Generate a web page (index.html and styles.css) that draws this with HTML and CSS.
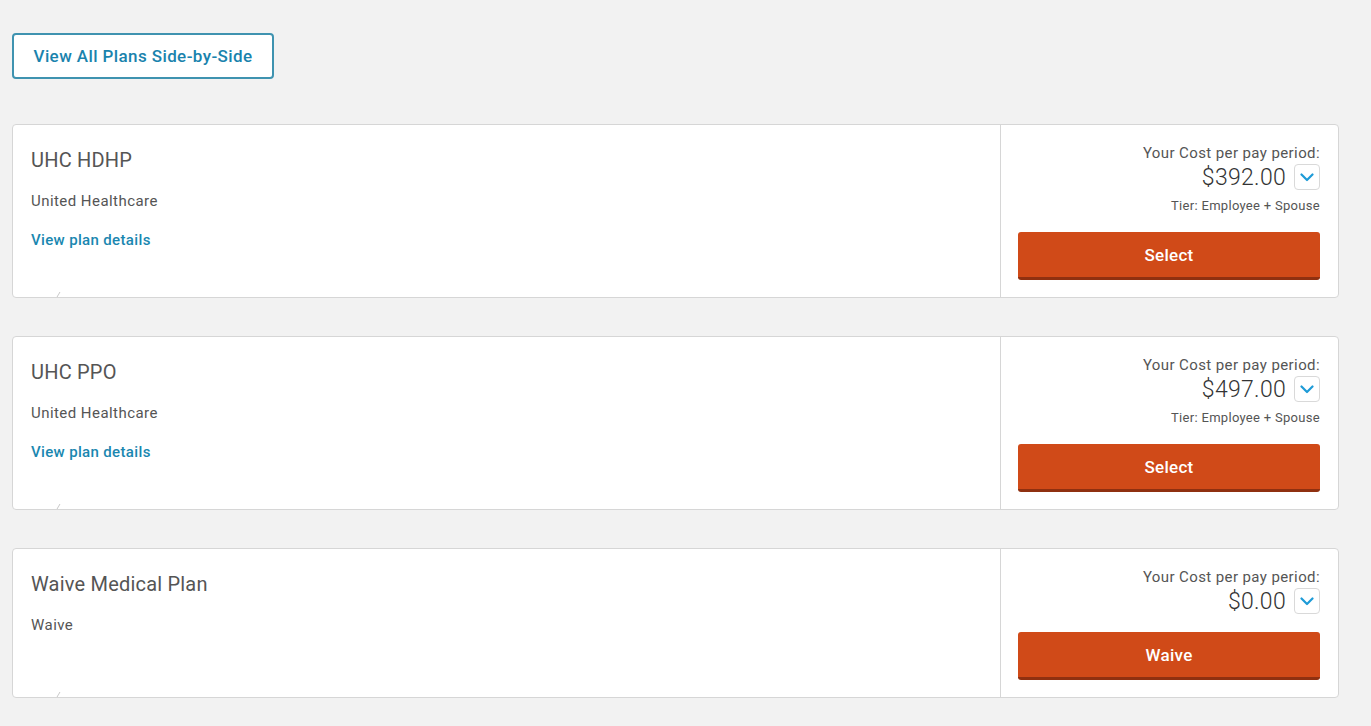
FILE: index.html
```html
<!DOCTYPE html>
<html>
<head>
<meta charset="utf-8">
<link rel="stylesheet" href="styles.css">
</head>
<body>
<div class="page">
  <button class="compare-btn">View All Plans Side-by-Side</button>

  <div class="card">
    <div class="card-info">
      <div class="plan-name">UHC HDHP</div>
      <div class="carrier">United Healthcare</div>
      <a class="details-link">View plan details</a>
      <span class="tick"></span>
    </div>
    <div class="card-cost">
      <div class="cost-label">Your Cost per pay period:</div>
      <div class="cost-row"><span class="amount">$392.00</span><span class="chev"><svg width="14" height="9" viewBox="0 0 14 9"><path d="M1.5 1.5 L7 7 L12.5 1.5" fill="none" stroke="#1e9bd7" stroke-width="2.2" stroke-linecap="round" stroke-linejoin="round"/></svg></span></div>
      <div class="tier">Tier: Employee + Spouse</div>
      <button class="action-btn">Select</button>
    </div>
  </div>

  <div class="card">
    <div class="card-info">
      <div class="plan-name">UHC PPO</div>
      <div class="carrier">United Healthcare</div>
      <a class="details-link">View plan details</a>
      <span class="tick"></span>
    </div>
    <div class="card-cost">
      <div class="cost-label">Your Cost per pay period:</div>
      <div class="cost-row"><span class="amount">$497.00</span><span class="chev"><svg width="14" height="9" viewBox="0 0 14 9"><path d="M1.5 1.5 L7 7 L12.5 1.5" fill="none" stroke="#1e9bd7" stroke-width="2.2" stroke-linecap="round" stroke-linejoin="round"/></svg></span></div>
      <div class="tier">Tier: Employee + Spouse</div>
      <button class="action-btn">Select</button>
    </div>
  </div>

  <div class="card">
    <div class="card-info">
      <div class="plan-name">Waive Medical Plan</div>
      <div class="carrier">Waive</div>
      <span class="tick"></span>
    </div>
    <div class="card-cost">
      <div class="cost-label">Your Cost per pay period:</div>
      <div class="cost-row"><span class="amount">$0.00</span><span class="chev"><svg width="14" height="9" viewBox="0 0 14 9"><path d="M1.5 1.5 L7 7 L12.5 1.5" fill="none" stroke="#1e9bd7" stroke-width="2.2" stroke-linecap="round" stroke-linejoin="round"/></svg></span></div>
      <button class="action-btn waive">Waive</button>
    </div>
  </div>
</div>
</body>
</html>
```

FILE: styles.css
```css
* { box-sizing: border-box; }
html, body { margin: 0; padding: 0; }
body {
  background: #f2f2f2;
  font-family: Roboto, "Liberation Sans", Arial, sans-serif;
  color: #555;
}
.page {
  padding: 33px 32px 20px 12px;
  display: flex;
  flex-direction: column;
  align-items: stretch;
}
.compare-btn {
  align-self: flex-start;
  width: 262px;
  height: 46px;
  background: #fff;
  border: 2px solid #3f93b0;
  border-radius: 4px;
  color: #1a83ad;
  font-family: Roboto, "Liberation Sans", Arial, sans-serif;
  font-size: 17px;
  font-weight: 500;
  letter-spacing: 0.4px;
  margin-bottom: 45px;
  padding: 0;
}
.card {
  display: flex;
  background: #fff;
  border: 1px solid #d6d6d6;
  border-radius: 4px;
  margin-bottom: 38px;
}
.card-info {
  flex: 1;
  padding: 22px 18px 18px 18px;
  border-right: 1px solid #d6d6d6;
  position: relative;
}
.plan-name {
  font-size: 20px;
  line-height: 26px;
  color: #555;
  letter-spacing: 0.2px;
}
.carrier {
  font-size: 15px;
  line-height: 18px;
  margin-top: 19px;
  color: #555;
  letter-spacing: 0.45px;
}
.details-link {
  display: block;
  font-size: 15px;
  line-height: 18px;
  margin-top: 21px;
  color: #1a87b0;
  font-weight: 500;
  letter-spacing: 0.35px;
}
.tick {
  position: absolute;
  left: 45px;
  bottom: 0;
  width: 1px;
  height: 5px;
  background: #c8c8c8;
  transform: skewX(-30deg);
}
.card-cost {
  width: 337px;
  padding: 19px 18px 17px 17px;
  display: flex;
  flex-direction: column;
  align-items: flex-end;
}
.cost-label {
  font-size: 15px;
  line-height: 18px;
  color: #555;
  letter-spacing: 0.4px;
}
.cost-row {
  display: flex;
  align-items: center;
  margin-top: 2px;
  height: 26px;
}
.amount {
  font-size: 23px;
  font-weight: 300;
  color: #333;
  letter-spacing: 0.3px;
}
.chev {
  width: 26px;
  height: 26px;
  margin-left: 8px;
  border: 1px solid #d9d9d9;
  border-radius: 4px;
  display: flex;
  align-items: center;
  justify-content: center;
  background: #fff;
}
.tier {
  font-size: 13px;
  line-height: 16px;
  margin-top: 8px;
  color: #555;
  letter-spacing: 0.3px;
}
.action-btn {
  align-self: stretch;
  height: 48px;
  margin-top: 18px;
  background: #d04a18;
  border: none;
  border-bottom: 3px solid #8f3010;
  border-radius: 3px;
  color: #fff;
  font-family: Roboto, "Liberation Sans", Arial, sans-serif;
  font-size: 17px;
  font-weight: 500;
  letter-spacing: 0.3px;
  padding: 0;
}
.action-btn.waive {
  margin-top: 18px;
}
```
